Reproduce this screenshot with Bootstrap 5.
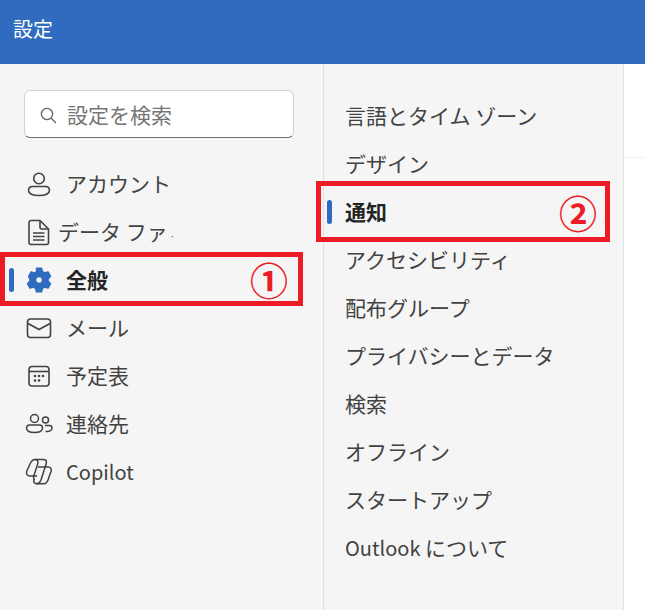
<!DOCTYPE html>
<html lang="ja">
<head>
<meta charset="utf-8">
<title>設定</title>
<link href="https://cdn.jsdelivr.net/npm/bootstrap@5.3.0/dist/css/bootstrap.min.css" rel="stylesheet">
<style>
html,body{height:100%;margin:0;overflow:hidden}
body{font-family:"Noto Sans CJK JP","Liberation Sans",sans-serif;color:#424242;background:#fff;width:645px;height:610px;position:relative}
.hdr{height:64px;background:#2f6cc0;color:#fff;font-size:20px;padding-left:13px;padding-bottom:6px}
.shell{height:546px}
.pane-a{width:324px;background:#f5f5f5;border-right:1px solid #e0e0e0;padding:26px 0 0 0}
.pane-b{width:300px;background:#f5f5f5;border-right:1px solid #e0e0e0;padding:28px 0 0 0}
.pane-c{flex:1;background:#fff}
.pane-c div{height:94px;border-bottom:1px solid #f0f0f0}
.srch{width:270px;height:48px;margin-left:24px;margin-bottom:22px;background:#fff;border:1px solid #d1d1d1;border-bottom-color:#707070;border-radius:6px;padding-left:15px;padding-top:2px;gap:10px;color:#757575;font-size:21px}
.srch svg{width:17px;height:17px;flex:none}
.row-a,.row-b{height:48px;font-size:21px;white-space:nowrap;position:relative}
.row-a{padding-left:25px}
.row-b{padding-left:21px}
.lat{font-size:20px}
.ico{width:28px;height:28px;flex:none;margin-right:13px}
.ico2{margin-right:5px}
.tiny{font-size:9px;margin-left:2px}
.sel{font-weight:700;color:#242424}
.tick{position:absolute;width:5px;height:24px;border-radius:3px;background:#2f6cc0;top:12px}
.row-a .tick{left:9px}
.row-b .tick{left:3px}
.box{position:absolute;border:5px solid #ed1c24;color:#ed1c24;font-size:38px;font-weight:700;line-height:1}
.box1{left:0;top:252px;width:303px;height:54px;padding-right:10px}
.box2{left:316px;top:181px;width:294px;height:61px;padding-right:8px}
</style>
</head>
<body>
<div class="hdr d-flex align-items-center">設定</div>
<div class="shell d-flex">
  <div class="pane-a">
    <div class="srch d-flex align-items-center">
      <svg viewBox="0 0 17 17" fill="none" stroke="#616161" stroke-width="1.3"><circle cx="7" cy="7" r="5.6"/><path d="M11.2 11.2 16 16"/></svg>
      <span>設定を検索</span>
    </div>
    <div class="row-a d-flex align-items-center">
      <svg class="ico" viewBox="0 0 28 28" fill="none" stroke="#424242" stroke-width="1.6"><circle cx="14" cy="8.500" r="5.300"/><path d="M7.500 16.500h13a4 4 0 0 1 4 3.500c0 3.500-4 5.500-10.500 5.500S3.500 23.500 3.500 20a4 4 0 0 1 4-3.500Z"/></svg>
      <span>アカウント</span>
    </div>
    <div class="row-a d-flex align-items-center">
      <svg class="ico ico2" viewBox="0 0 28 28" fill="none" stroke="#424242" stroke-width="1.6"><path d="M6 2.500h9L23.500 11v13.500a2 2 0 0 1-2 2H6a2 2 0 0 1-2-2v-20a2 2 0 0 1 2-2Z"/><path d="M15 2.500v6.500a2 2 0 0 0 2 2h6.500M8 15h11.500M8 18.500h11.500M8 22h11.500"/></svg>
      <span>データ ファ<span class="tiny">·</span></span>
    </div>
    <div class="row-a d-flex align-items-center sel">
      <span class="tick"></span>
      <svg class="ico" viewBox="0 0 28 28"><path fill="#2f6cc0" stroke="#2f6cc0" stroke-width="1.6" stroke-linejoin="round" fill-rule="evenodd" d="M11.500 2.300h5l.9 3.300 2.300 1.300 3.300-.9 2.500 4.300-2.400 2.400v2.600l2.400 2.400-2.500 4.300-3.300-.9-2.300 1.300-.9 3.300h-5l-.9-3.300-2.300-1.300-3.300.9-2.500-4.300 2.400-2.400v-2.600L3.700 10.300l2.500-4.300 3.300.9 2.300-1.300ZM14 10.500a3.500 3.500 0 1 0 0 7 3.500 3.500 0 0 0 0-7Z"/></svg>
      <span>全般</span>
    </div>
    <div class="row-a d-flex align-items-center">
      <svg class="ico" viewBox="0 0 28 28" fill="none" stroke="#424242" stroke-width="1.6"><rect x="2.500" y="5" width="23" height="18.500" rx="3"/><path d="M3 9.500 14 15.500 25 9.500"/></svg>
      <span>メール</span>
    </div>
    <div class="row-a d-flex align-items-center">
      <svg class="ico" viewBox="0 0 28 28" fill="none" stroke="#424242" stroke-width="1.6"><rect x="4" y="4.500" width="20" height="19.500" rx="3"/><path d="M4 9.500h20"/><g fill="#424242" stroke="none"><circle cx="10" cy="14" r="1.300"/><circle cx="14" cy="14" r="1.300"/><circle cx="18" cy="14" r="1.300"/><circle cx="10" cy="18.500" r="1.300"/><circle cx="14" cy="18.500" r="1.300"/></g></svg>
      <span>予定表</span>
    </div>
    <div class="row-a d-flex align-items-center">
      <svg class="ico" viewBox="0 0 28 28" fill="none" stroke="#424242" stroke-width="1.500"><circle cx="9.500" cy="8.500" r="4"/><path d="M4.500 15h10a3 3 0 0 1 3 3c0 3-3.500 4.500-8 4.500S1.500 21 1.500 18a3 3 0 0 1 3-3Z"/><circle cx="20.500" cy="10" r="3"/><path d="M20 15.500h4.500a2.500 2.500 0 0 1 2.500 2.500c0 2.500-3 4-6.500 3.500"/></svg>
      <span>連絡先</span>
    </div>
    <div class="row-a d-flex align-items-center">
      <svg class="ico" viewBox="0 0 28 28" fill="none" stroke="#424242" stroke-width="1.500" stroke-linejoin="round" stroke-linecap="round"><path d="M20.300 9 21.300 5c.6-2-.4-3.500-2.800-3.500H10C7.500 1.500 6.500 3 5.500 5L1.800 13c-1 2.800.5 5 3.200 5h6.500"/><path d="M10 1.500c2.500 0 3.500 2 2.700 4.500L8.800 18c-.5 1.500 0 3 .2 3.500"/><path d="M13.500 9H23c2.800 0 4 2 3 4.500l-3 8.500c-.8 2.300-2.300 3.700-4.700 3.700H11.500c-2.500 0-3.300-2-2.500-4.200"/><path d="M11.500 25.700c2 0 3.500-1 4.300-3.200L20.500 8"/></svg>
      <span class="lat">Copilot</span>
    </div>
  </div>
  <div class="pane-b">
    <div class="row-b d-flex align-items-center">言語とタイム ゾーン</div>
    <div class="row-b d-flex align-items-center">デザイン</div>
    <div class="row-b d-flex align-items-center sel"><span class="tick"></span>通知</div>
    <div class="row-b d-flex align-items-center">アクセシビリティ</div>
    <div class="row-b d-flex align-items-center">配布グループ</div>
    <div class="row-b d-flex align-items-center">プライバシーとデータ</div>
    <div class="row-b d-flex align-items-center">検索</div>
    <div class="row-b d-flex align-items-center">オフライン</div>
    <div class="row-b d-flex align-items-center">スタートアップ</div>
    <div class="row-b d-flex align-items-center"><span><span class="lat">Outlook </span>について</span></div>
  </div>
  <div class="pane-c"><div></div></div>
</div>
<div class="box box1 d-flex align-items-center justify-content-end">①</div>
<div class="box box2 d-flex align-items-center justify-content-end">②</div>
<script src="https://cdn.jsdelivr.net/npm/bootstrap@5.3.0/dist/js/bootstrap.bundle.min.js"></script>
</body>
</html>
